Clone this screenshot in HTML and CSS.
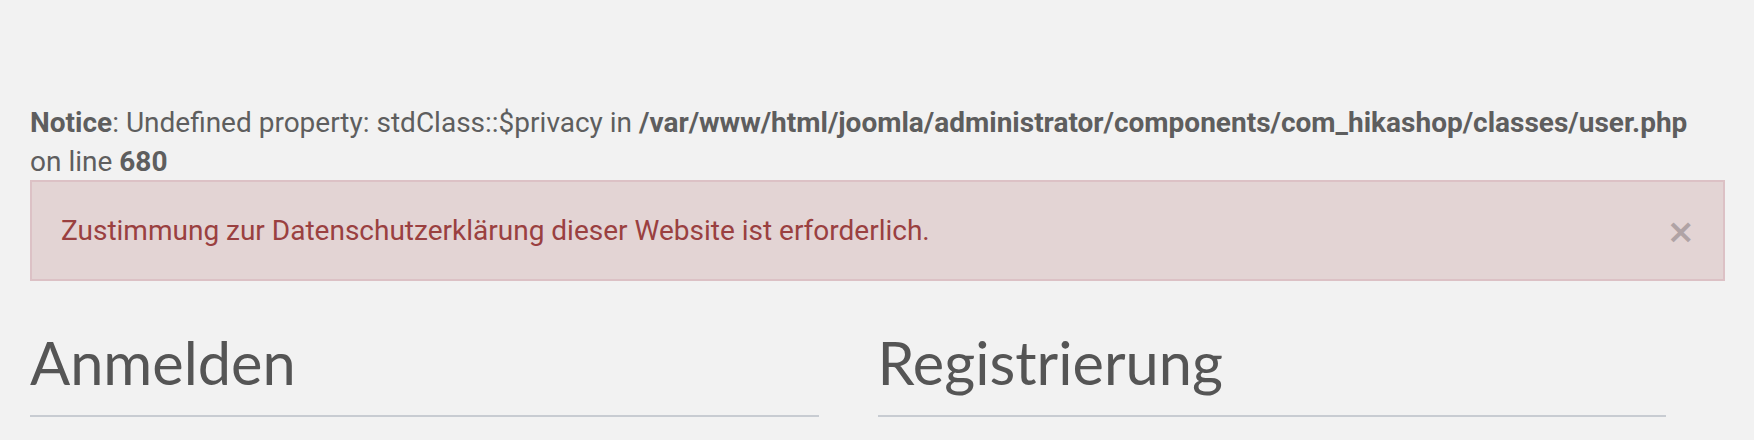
FILE: index.html
```html
<!DOCTYPE html>
<html lang="de">
<head>
<meta charset="utf-8">
<title>Anmelden</title>
<link rel="stylesheet" href="styles.css">
</head>
<body>
<div class="page">
  <div class="notice"><b>Notice</b>: Undefined property: stdClass::$privacy in <b>/var/www/html/joomla/administrator/components/com_hikashop/classes/user.php</b><br>on line <b>680</b></div>
  <div class="alert">
    <span class="alert-text">Zustimmung zur Datenschutzerklärung dieser Website ist erforderlich.</span>
    <span class="alert-close">×</span>
  </div>
  <div class="columns">
    <div class="col">
      <h1 class="heading">Anmelden</h1>
      <div class="rule"></div>
    </div>
    <div class="col">
      <h1 class="heading">Registrierung</h1>
      <div class="rule"></div>
    </div>
  </div>
</div>
</body>
</html>
```

FILE: styles.css
```css
html, body {
  margin: 0;
  padding: 0;
  background: #f2f2f2;
}
body {
  font-family: Roboto, "Liberation Sans", sans-serif;
  color: #5a5a5a;
  overflow: hidden;
}
.page {
  padding: 103px 29px 0 30px;
}
.notice {
  font-size: 28px;
  line-height: 39px;
  color: #5e5e5e;
}
.notice b {
  font-weight: 700;
}
.alert {
  margin-top: -1px;
  height: 101px;
  box-sizing: border-box;
  border: 2px solid #dcc1c5;
  background: #e3d4d4;
  display: flex;
  align-items: center;
  justify-content: space-between;
  padding: 0 28px 0 29px;
}
.alert-text {
  font-size: 28px;
  line-height: 36px;
  color: #9a4040;
}
.alert-close {
  font-family: "DejaVu Sans", sans-serif;
  font-weight: 700;
  font-size: 34px;
  line-height: 1;
  color: #b0a3a5;
}
.columns {
  display: grid;
  grid-template-columns: 1fr 1fr;
}
.col {
  padding-right: 59px;
}
.heading {
  margin: 0;
  padding-top: 47px;
  font-family: Lato, "Noto Sans", sans-serif;
  font-weight: 400;
  font-size: 59.5px;
  line-height: 68px;
  color: #555555;
}
.rule {
  margin-top: 19px;
  height: 2px;
  background: #c8ccd2;
}
```
